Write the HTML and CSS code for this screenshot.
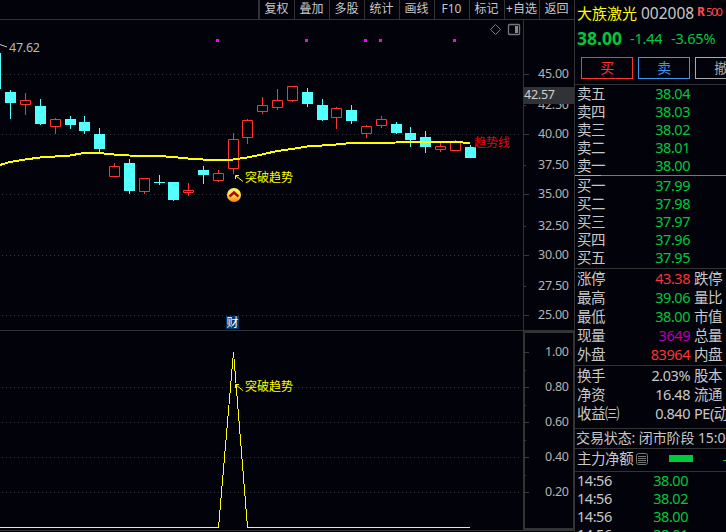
FILE: index.html
```
<!DOCTYPE html>
<html lang="zh-CN">
<head>
  <meta charset="UTF-8">
  <title>大族激光 002008</title>
  <link rel="stylesheet" href="styles.css">
</head>
<body>
  <div class="app">
    <div class="left">
      <div class="toolbar">
        <span>复权</span><span>叠加</span><span>多股</span><span>统计</span><span>画线</span><span>F10</span><span>标记</span><span>+自选</span><span>返回</span>
      </div>

      <div class="chart-row">
        <svg class="kline" viewBox="0 20 523 310" width="523" height="310">
          <g class="grid">
            <path d="M2 74.5H520M2 134.5H520M2 194.5H520M2 255.5H520M2 315.5H520"/>
          </g>
          <g class="dots">
            <rect x="216" y="39" width="3" height="3"/>
            <rect x="305" y="39" width="3" height="3"/>
            <rect x="364" y="39" width="3" height="3"/>
            <rect x="379" y="39" width="3" height="3"/>
            <rect x="453" y="39" width="3" height="3"/>
          </g>
          <path class="pointer" d="M0 44.5L7 47"/>
          <text class="high" x="9" y="52" textLength="31">47.62</text>
          <path class="tool-icon" d="M495.500 24.500l5 5l-5 5l-5 -5z"/>
          <rect class="tool-icon wide" x="508.500" y="24.500" width="11" height="10" rx="1"/>
          <rect class="tool-fill" x="515" y="26" width="3" height="7"/>
          <g id="candles"></g>
          <polyline class="trend" points="0,165 10,162 25,159.500 40,157.500 55,156.500 70,155.500 84,153 99,153 114,154.500 129,155.500 159,156 173,157 188,158.500 203,159.500 218,160 233,159.500 247,157.500 262,154.500 277,151 292,149 307,146.500 322,145.500 336,144.500 351,143 396,142.500 410,142 455,142 470,143"/>
          <text class="trend-name" x="474" y="147">趋势线</text>
          <path class="arrow" d="M235.500 179V175.500H239M236 176L243 181.500"/>
          <text class="note" x="245" y="182">突破趋势</text>
          <defs>
            <linearGradient id="gold" x1="0" y1="0" x2="0" y2="1">
              <stop offset="0" stop-color="#fff36a"/>
              <stop offset=".5" stop-color="#ffe24a"/>
              <stop offset="1" stop-color="#f57c10"/>
            </linearGradient>
          </defs>
          <circle cx="234" cy="195" r="7" fill="url(#gold)"/>
          <path d="M229.500 196.500L234 192.500L238.500 196.500" fill="none" stroke="#b00c10" stroke-width="2.500"/>
          <rect x="226" y="316" width="13" height="13" fill="#00386c"/>
          <text class="cai" x="226.500" y="327">财</text>
        </svg>
        <svg class="axis" id="axis-price" viewBox="523 20 51 310" width="51" height="310"></svg>
      </div>

      <div class="chart-row sub">
        <svg class="signal" viewBox="0 331 523 199" width="523" height="199">
          <g class="grid">
            <path d="M2 387.500H520M2 422.500H520M2 457.500H520M2 492.500H520"/>
          </g>
          <path class="spike" d="M0 527.500H218.500L233.500 352L247.500 527.500H470"/>
          <path class="arrow" d="M235.500 388V384.500H239M236 385L243 390.500"/>
          <text class="note" x="245" y="391">突破趋势</text>
        </svg>
        <svg class="axis" id="axis-sub" viewBox="523 331 51 199" width="51" height="199"></svg>
      </div>
    </div>

    <div class="quote">
      <div class="name-row">
        <span class="name">大族激光</span><span class="code">002008</span><b class="r">R</b><span class="r500">500</span>
      </div>
      <div class="price-row down">
        <b>38.00</b><span class="chg">-1.44</span><span>-3.65%</span>
      </div>
      <div class="buttons">
        <div class="btn buy">买</div>
        <div class="btn sell">卖</div>
        <div class="btn cancel">撤</div>
      </div>

      <div class="block asks">
        <div class="row"><span>卖五</span><span class="val down">38.04</span></div>
        <div class="row"><span>卖四</span><span class="val down">38.03</span></div>
        <div class="row"><span>卖三</span><span class="val down">38.02</span></div>
        <div class="row"><span>卖二</span><span class="val down">38.01</span></div>
        <div class="row"><span>卖一</span><span class="val down">38.00</span></div>
      </div>
      <div class="ratio"></div>
      <div class="block bids">
        <div class="row"><span>买一</span><span class="val down">37.99</span></div>
        <div class="row"><span>买二</span><span class="val down">37.98</span></div>
        <div class="row"><span>买三</span><span class="val down">37.97</span></div>
        <div class="row"><span>买四</span><span class="val down">37.96</span></div>
        <div class="row"><span>买五</span><span class="val down">37.95</span></div>
      </div>

      <div class="block stats">
        <div class="row"><span>涨停</span><span class="val up">43.38</span><span>跌停</span></div>
        <div class="row"><span>最高</span><span class="val down">39.06</span><span>量比</span></div>
        <div class="row"><span>最低</span><span class="val down">38.00</span><span>市值</span></div>
        <div class="row"><span>现量</span><span class="val purple">3649</span><span>总量</span></div>
        <div class="row"><span>外盘</span><span class="val up">83964</span><span>内盘</span></div>
      </div>
      <div class="block stats finance">
        <div class="row"><span>换手</span><span class="val">2.03%</span><span>股本</span></div>
        <div class="row"><span>净资</span><span class="val">16.48</span><span>流通</span></div>
        <div class="row"><span>收益<i>㈢</i></span><span class="val">0.840</span><span>PE(动)</span></div>
      </div>

      <div class="status">交易状态: 闭市阶段 15:00</div>
      <div class="flow">
        <span>主力净额</span>
        <svg width="12" height="12" viewBox="0 0 12 12">
          <rect x=".5" y=".5" width="11" height="11" rx="2"/>
          <path d="M2 3.500H10M2 5.500H10M2 7.500H10M2 9.500H10"/>
        </svg>
        <div class="flow-bar"></div>
        <div class="flow-dash"></div>
      </div>
      <div class="block ticks">
        <div class="row"><span>14:56</span><span class="val down">38.00</span></div>
        <div class="row"><span>14:56</span><span class="val down">38.02</span></div>
        <div class="row"><span>14:56</span><span class="val down">38.00</span></div>
        <div class="row"><span>14:56</span><span class="val down">38.01</span></div>
      </div>
    </div>
  </div>

  <script src="chart.js"></script>
</body>
</html>
```
FILE: styles.css
```
body {
  margin: 0;
  background: #02020a;
  color: #c8c8c8;
  font-family: "Noto Sans", "Noto Sans CJK SC", sans-serif;
  overflow: hidden;
}

.app {
  display: flex;
  width: 726px;
  height: 532px;
  overflow: hidden;
}

.left {
  width: 574px;
  flex: none;
}

/* toolbar */
.toolbar {
  display: flex;
  justify-content: flex-end;
  height: 19px;
  border-bottom: 1px solid #333;
  font-size: 12px;
  line-height: 18px;
}

.toolbar span {
  box-sizing: border-box;
  width: 35px;
  padding-right: 1px;
  border-left: 1px solid #333;
  text-align: center;
  white-space: nowrap;
}

.toolbar span:first-child {
  width: 36px;
  border-left-width: 2px;
}

/* charts */
.chart-row {
  display: flex;
  height: 310px;
}

.chart-row.sub {
  height: 199px;
  border-top: 1px solid #333;
  border-bottom: 1px solid #333;
}

svg {
  display: block;
}

.grid path {
  stroke: #343438;
  stroke-dasharray: 1 3;
}

.dots rect {
  fill: #f0f;
}

.pointer {
  stroke: #c8c8c8;
}

.high {
  fill: #b8b8b8;
  font-size: 12.5px;
}

.tool-icon {
  fill: none;
  stroke: #777;
}

.tool-icon.wide {
  stroke-width: 1.3;
}

.tool-fill {
  fill: #888;
}

.up-candle {
  fill: none;
  stroke: #ff3232;
}

.down-candle {
  fill: #54ffff;
}

.trend {
  fill: none;
  stroke: #ff0;
  stroke-width: 2;
  shape-rendering: crispEdges;
}

.trend-name {
  fill: #f00000;
  font-size: 12px;
}

.note {
  fill: #ff0;
  font-size: 12px;
}

.arrow,
.spike {
  fill: none;
  stroke: #ff0;
}

.spike {
  shape-rendering: crispEdges;
}

.cai {
  fill: #fff;
  font-size: 12px;
}

.axis text {
  fill: #b4b4b4;
  font-size: 12.5px;
}

.axis .tick {
  stroke: #3a3a3a;
}

.axis .frame {
  fill: none;
  stroke: #333;
}

.axis .tag {
  fill: #303236;
}

.axis .tag-text {
  fill: #d0d0d0;
}

/* quote panel */
.quote {
  box-sizing: border-box;
  width: 152px;
  height: 532px;
  flex: none;
  border-left: 1px solid #333;
  overflow: hidden;
  font-size: 14.5px;
  letter-spacing: -0.45px;
  white-space: nowrap;
}

.up {
  color: #ff3232;
}

.down {
  color: #00c83c;
}

.purple {
  color: #b400b4;
}

.name-row {
  display: flex;
  height: 26px;
  padding-left: 2px;
  line-height: 26px;
}

.name {
  width: 64px;
  color: #ff0;
  font-size: 15px;
  letter-spacing: 0;
}

.code {
  width: 56px;
  font-size: 15.5px;
  letter-spacing: 0;
}

.r {
  width: 9px;
  color: #ff4a4a;
  font-size: 12px;
  line-height: 24px;
}

.r500 {
  color: #ff4a4a;
  font-size: 11.5px;
  line-height: 24px;
  letter-spacing: -1.4px;
}

.price-row {
  display: flex;
  height: 31px;
  padding-left: 2px;
  line-height: 25px;
}

.price-row b {
  width: 53px;
  font-size: 17.5px;
  letter-spacing: 0;
}

.chg {
  width: 41px;
}

.price-row span {
  letter-spacing: -0.2px;
}

.buttons {
  display: flex;
  gap: 5px;
  height: 27px;
  padding-left: 6px;
  border-bottom: 1px solid #333;
}

.btn {
  box-sizing: border-box;
  width: 52px;
  height: 22px;
  flex: none;
  border: 1px solid;
  font-size: 14px;
  line-height: 19px;
  text-align: center;
}

.buy {
  color: #ff3232;
}

.sell {
  color: #4096e8;
}

.cancel {
  color: #aaa;
}

.row {
  display: flex;
  height: 18px;
  padding-left: 2px;
  line-height: 16px;
}

.row span {
  flex: none;
}

.row span:first-child {
  width: 50px;
}

.row .val {
  width: 63px;
  margin-right: 4px;
  text-align: right;
}

.row i {
  font-style: normal;
}

.ratio {
  height: 1px;
  background: linear-gradient(to right, #e8a03c 26px, #4082d2 26px);
}

.bids {
  padding: 1px 0;
  border-bottom: 1px solid #333;
}

.stats {
  padding-bottom: 1px;
  border-bottom: 1px solid #333;
}

.finance {
  padding-bottom: 5px;
}

.stats .row {
  height: 19px;
  line-height: 19px;
}

.status {
  height: 19px;
  padding-left: 1px;
  border-bottom: 1px solid #333;
  font-size: 14px;
  line-height: 18px;
  letter-spacing: -0.1px;
}

.flow {
  display: flex;
  align-items: center;
  height: 22px;
  padding-left: 2px;
  border-bottom: 1px solid #333;
}

.flow > * {
  flex: none;
}

.flow span {
  height: 22px;
  line-height: 18px;
}

.flow svg {
  margin: -2px 0 0 3px;
  fill: none;
  stroke: #777;
}

.flow-bar {
  width: 24px;
  height: 7px;
  margin: -3px 30px 0 21px;
  background: #00c83c;
}

.flow-dash {
  width: 8px;
  height: 1px;
  background: #00c83c;
}

.ticks .val {
  width: 61px;
}
```
FILE: chart.js
```
// [type, centre x, body top, body bottom, wick top, wick bottom]
const candles = [
  ['d', -5, 53, 89, 53, 89],
  ['d', 10, 92, 103, 90, 119],
  ['u', 25, 100, 105, 93, 115],
  ['d', 40, 106, 124, 99, 125],
  ['u', 55, 119, 127, 118, 134],
  ['d', 70, 119, 125, 116, 129],
  ['d', 84, 122, 131, 116, 134],
  ['d', 99, 134, 149, 128, 153],
  ['u', 114, 166, 177, 163, 177],
  ['d', 129, 163, 191, 159, 194],
  ['u', 144, 178, 192, 178, 194],
  ['d', 159, 182, 183, 175, 185],
  ['d', 173, 182, 200, 182, 201],
  ['u', 188, 190, 193, 183, 196],
  ['d', 203, 170, 175, 166, 184],
  ['u', 218, 173, 181, 170, 182],
  ['u', 233, 139, 169, 133, 174],
  ['u', 247, 120, 138, 119, 144],
  ['u', 262, 105, 112, 97, 114],
  ['u', 277, 100, 108, 89, 110],
  ['u', 292, 86, 101, 86, 102],
  ['d', 307, 92, 104, 88, 107],
  ['d', 322, 105, 120, 99, 121],
  ['u', 336, 108, 118, 107, 129],
  ['d', 351, 110, 121, 105, 124],
  ['u', 366, 126, 134, 125, 138],
  ['u', 381, 119, 126, 116, 128],
  ['d', 396, 124, 133, 122, 134],
  ['d', 410, 133, 140, 127, 147],
  ['d', 425, 137, 147, 131, 153],
  ['u', 440, 146, 150, 143, 152],
  ['u', 455, 141, 151, 140, 151],
  ['d', 470, 147, 158, 145, 158]
];

document.getElementById('candles').innerHTML = candles.map(([type, x, top, bottom, high, low]) => {
  if (type === 'd') {
    return `<path class="down-candle" d="M${x - 5} ${top}h11V${bottom}h-11zM${x} ${high}h1V${low}h-1z"/>`;
  }
  return `<path class="up-candle" d="M${x - 4.5} ${top + 0.5}h10V${bottom - 0.5}h-10zM${x + 0.5} ${high}V${top}M${x + 0.5} ${bottom}V${low}"/>`;
}).join('');

function label(text, y, width) {
  return `<text x="${569 - width}" y="${y + 4}" textLength="${width}">${text}</text>`;
}

function tick(y, size) {
  return `<path class="tick" d="M524 ${y + 0.5}h${size}"/>`;
}

const prices = [
  ['45.00', 74], ['42.50', 105], ['40.00', 134], ['37.50', 165], ['35.00', 194],
  ['32.50', 226], ['30.00', 255], ['27.50', 286], ['25.00', 315]
];
document.getElementById('axis-price').innerHTML =
  '<path class="frame" d="M523.5 20V330"/>' +
  prices.map(([text, y], i) => tick(y, i % 2 ? 2 : 5) + label(text, y, 31)).join('') +
  '<rect class="tag" x="524" y="87" width="50" height="17"/>' +
  '<text class="tag-text" x="524" y="99" textLength="31">42.57</text>';

const levels = [['1.00', 352], ['0.80', 387], ['0.60', 422], ['0.40', 457], ['0.20', 492]];
document.getElementById('axis-sub').innerHTML =
  '<rect class="frame" x="524" y="332" width="50" height="197" stroke-width="2"/>' +
  levels.map(([text, y]) => tick(y, 5) + label(text, y, 24)).join('') +
  [370, 405, 440, 475].map(y => tick(y, 2)).join('');
```
